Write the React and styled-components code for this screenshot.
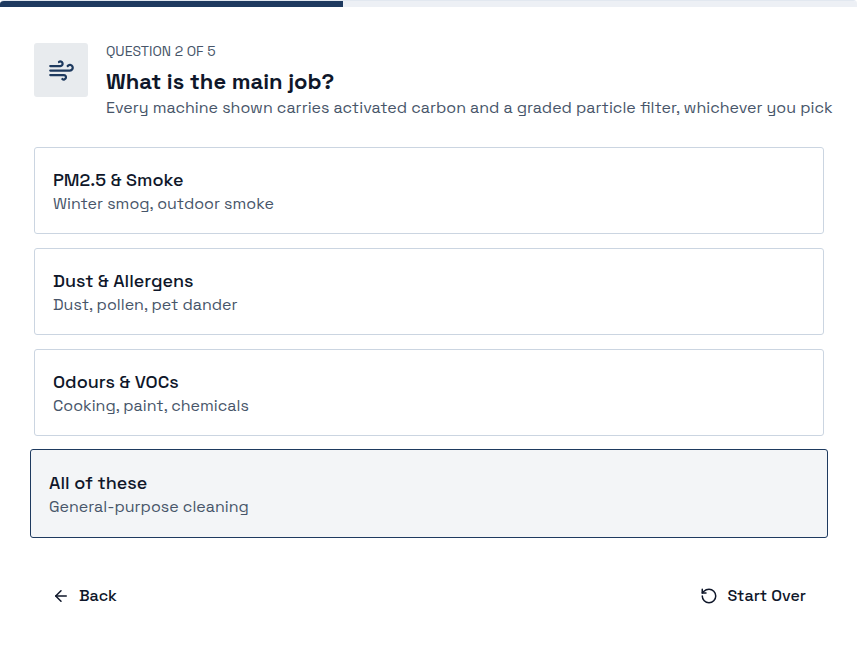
import React, { useState } from "react";
import styled, { createGlobalStyle } from "styled-components";
import { ArrowLeft, RotateCcw, Wind } from "lucide-react";

const GlobalStyle = createGlobalStyle`
  *, *::before, *::after { box-sizing: border-box; }
  body {
    margin: 0;
    background: #ffffff;
    color: #0f172a;
    font-family: "Space Grotesk", Inter, sans-serif;
    -webkit-font-smoothing: antialiased;
  }
`;

const Panel = styled.main`
  border-top: 1px solid #e2e8f0;
  border-radius: 4px 4px 0 0;
  overflow: hidden;
`;

const Track = styled.div`
  height: 6px;
  background: #edf0f5;
`;

const Fill = styled.div`
  height: 100%;
  background: #1e3a5f;
`;

const Body = styled.div`
  padding: 36px 33px 36px 34px;
`;

const Header = styled.header`
  display: flex;
  align-items: flex-start;
  gap: 18px;
  margin-bottom: 28px;
`;

const IconTile = styled.div`
  display: flex;
  flex: none;
  align-items: center;
  justify-content: center;
  width: 54px;
  height: 54px;
  border-radius: 3px;
  background: #e8ebee;
  color: #1e3a5f;
`;

const Heading = styled.div`
  min-width: 0;
`;

const Step = styled.p`
  margin: 0 0 6px;
  font-size: 14px;
  line-height: 17px;
  color: #475569;
`;

const Title = styled.h1`
  margin: 0;
  font-size: 22px;
  font-weight: 600;
  line-height: 31px;
`;

const Hint = styled.p`
  margin: 0;
  font-size: 16px;
  line-height: 22px;
  color: #475569;

  @media (min-width: 840px) {
    white-space: nowrap;
  }
`;

const Options = styled.div`
  display: grid;
  gap: 14px;
`;

const Option = styled.button`
  display: block;
  margin: ${(p) => (p.$selected ? "-1px -4px" : "0")};
  padding: ${(p) => (p.$selected ? "21px 18px 19px" : "20px 18px 18px")};
  border: 1px solid ${(p) => (p.$selected ? "#1e3a5f" : "#cbd5e1")};
  border-radius: 3px;
  background: ${(p) => (p.$selected ? "#f3f5f7" : "#ffffff")};
  color: inherit;
  font: inherit;
  text-align: left;
  cursor: pointer;
`;

const OptionName = styled.span`
  display: block;
  font-size: 18px;
  font-weight: 500;
  line-height: 24px;
`;

const OptionNote = styled.span`
  display: block;
  font-size: 16px;
  line-height: 23px;
  color: #475569;
`;

const Footer = styled.footer`
  display: flex;
  justify-content: space-between;
  margin-top: 38px;
`;

const NavButton = styled.button`
  display: flex;
  align-items: center;
  gap: 9px;
  padding: 9px 18px;
  border: 0;
  border-radius: 3px;
  background: transparent;
  color: inherit;
  font: inherit;
  font-size: 16px;
  font-weight: 500;
  line-height: 24px;
  cursor: pointer;
`;

const choices = [
  { name: "PM2.5 & Smoke", note: "Winter smog, outdoor smoke" },
  { name: "Dust & Allergens", note: "Dust, pollen, pet dander" },
  { name: "Odours & VOCs", note: "Cooking, paint, chemicals" },
  { name: "All of these", note: "General-purpose cleaning" },
];

const step = 2;
const total = 5;

export default function App() {
  const [picked, setPicked] = useState("All of these");
  return (
    <>
      <GlobalStyle />
      <Panel>
        <Track role="progressbar" aria-label="Quiz progress" aria-valuemin={0} aria-valuemax={total} aria-valuenow={step}>
          <Fill style={{ width: `${(step / total) * 100}%` }} />
        </Track>
        <Body>
          <Header>
            <IconTile>
              <Wind size={27} aria-hidden="true" />
            </IconTile>
            <Heading>
              <Step>QUESTION {step} OF {total}</Step>
              <Title>What is the main job?</Title>
              <Hint>Every machine shown carries activated carbon and a graded particle filter, whichever you pick</Hint>
            </Heading>
          </Header>
          <Options>
            {choices.map(({ name, note }) => (
              <Option
                key={name}
                type="button"
                aria-pressed={picked === name}
                $selected={picked === name}
                onClick={() => setPicked(name)}
              >
                <OptionName>{name}</OptionName>
                <OptionNote>{note}</OptionNote>
              </Option>
            ))}
          </Options>
          <Footer>
            <NavButton type="button">
              <ArrowLeft size={18} aria-hidden="true" />
              Back
            </NavButton>
            <NavButton type="button" onClick={() => setPicked("")}>
              <RotateCcw size={18} aria-hidden="true" />
              Start Over
            </NavButton>
          </Footer>
        </Body>
      </Panel>
    </>
  );
}
